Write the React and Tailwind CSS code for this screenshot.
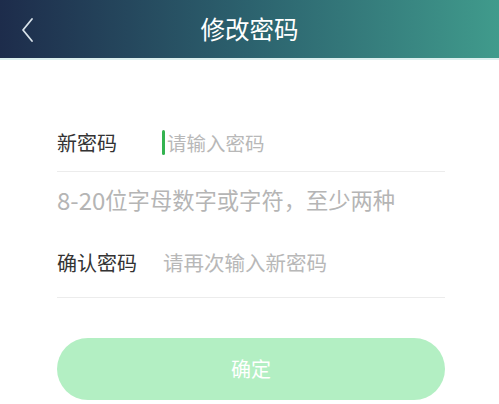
import React from "react";

export default function App() {
  const font = { fontFamily: '"Noto Sans CJK SC", "Noto Sans", sans-serif' };
  return (
    <div className="w-[499px] h-[404px] bg-white overflow-hidden" style={font}>
      <div className="h-[58px] bg-gradient-to-r from-[#1d2c4b] via-[#2c626e] to-[#409b8c] flex items-center relative">
        <div className="absolute left-[20px] top-[17px]">
          <svg width="14" height="26" viewBox="0 0 14 26" fill="none">
            <path d="M12 2 L3 13 L12 24" stroke="#d9e3ea" strokeWidth="1.8" strokeLinecap="round" strokeLinejoin="round" />
          </svg>
        </div>
        <div className="flex-1 text-center text-white text-[24.5px] leading-none">修改密码</div>
      </div>
      <div className="h-[2px] bg-[#dcefee]" />
      <div className="pl-[57px] pr-[54px] pt-[54px]">
        <div className="h-[58px] flex items-center border-b border-[#ececec]">
          <div className="w-[105px] text-[20px] text-[#333333]">新密码</div>
          <div className="relative flex items-center">
            <span className="w-[3px] h-[25px] bg-[#34b350] rounded-sm mr-[2px]" />
            <span className="text-[19.5px] text-[#b8b8b8]">请输入密码</span>
          </div>
        </div>
        <div className="h-[56px] flex items-center text-[22.3px] text-[#b5b5b5]">
          <span className="text-[24px] leading-none">8-20</span>
          <span>位字母数字或字符，至少两种</span>
        </div>
        <div className="h-[70px] flex items-center border-b border-[#ececec]">
          <div className="w-[106px] text-[20px] text-[#333333]">确认密码</div>
          <span className="text-[20.5px] text-[#b8b8b8]">请再次输入新密码</span>
        </div>
        <div className="mt-[40px] h-[62px] rounded-full bg-[#b3efc3] flex items-center justify-center text-white text-[20px]">确定</div>
      </div>
    </div>
  );
}
